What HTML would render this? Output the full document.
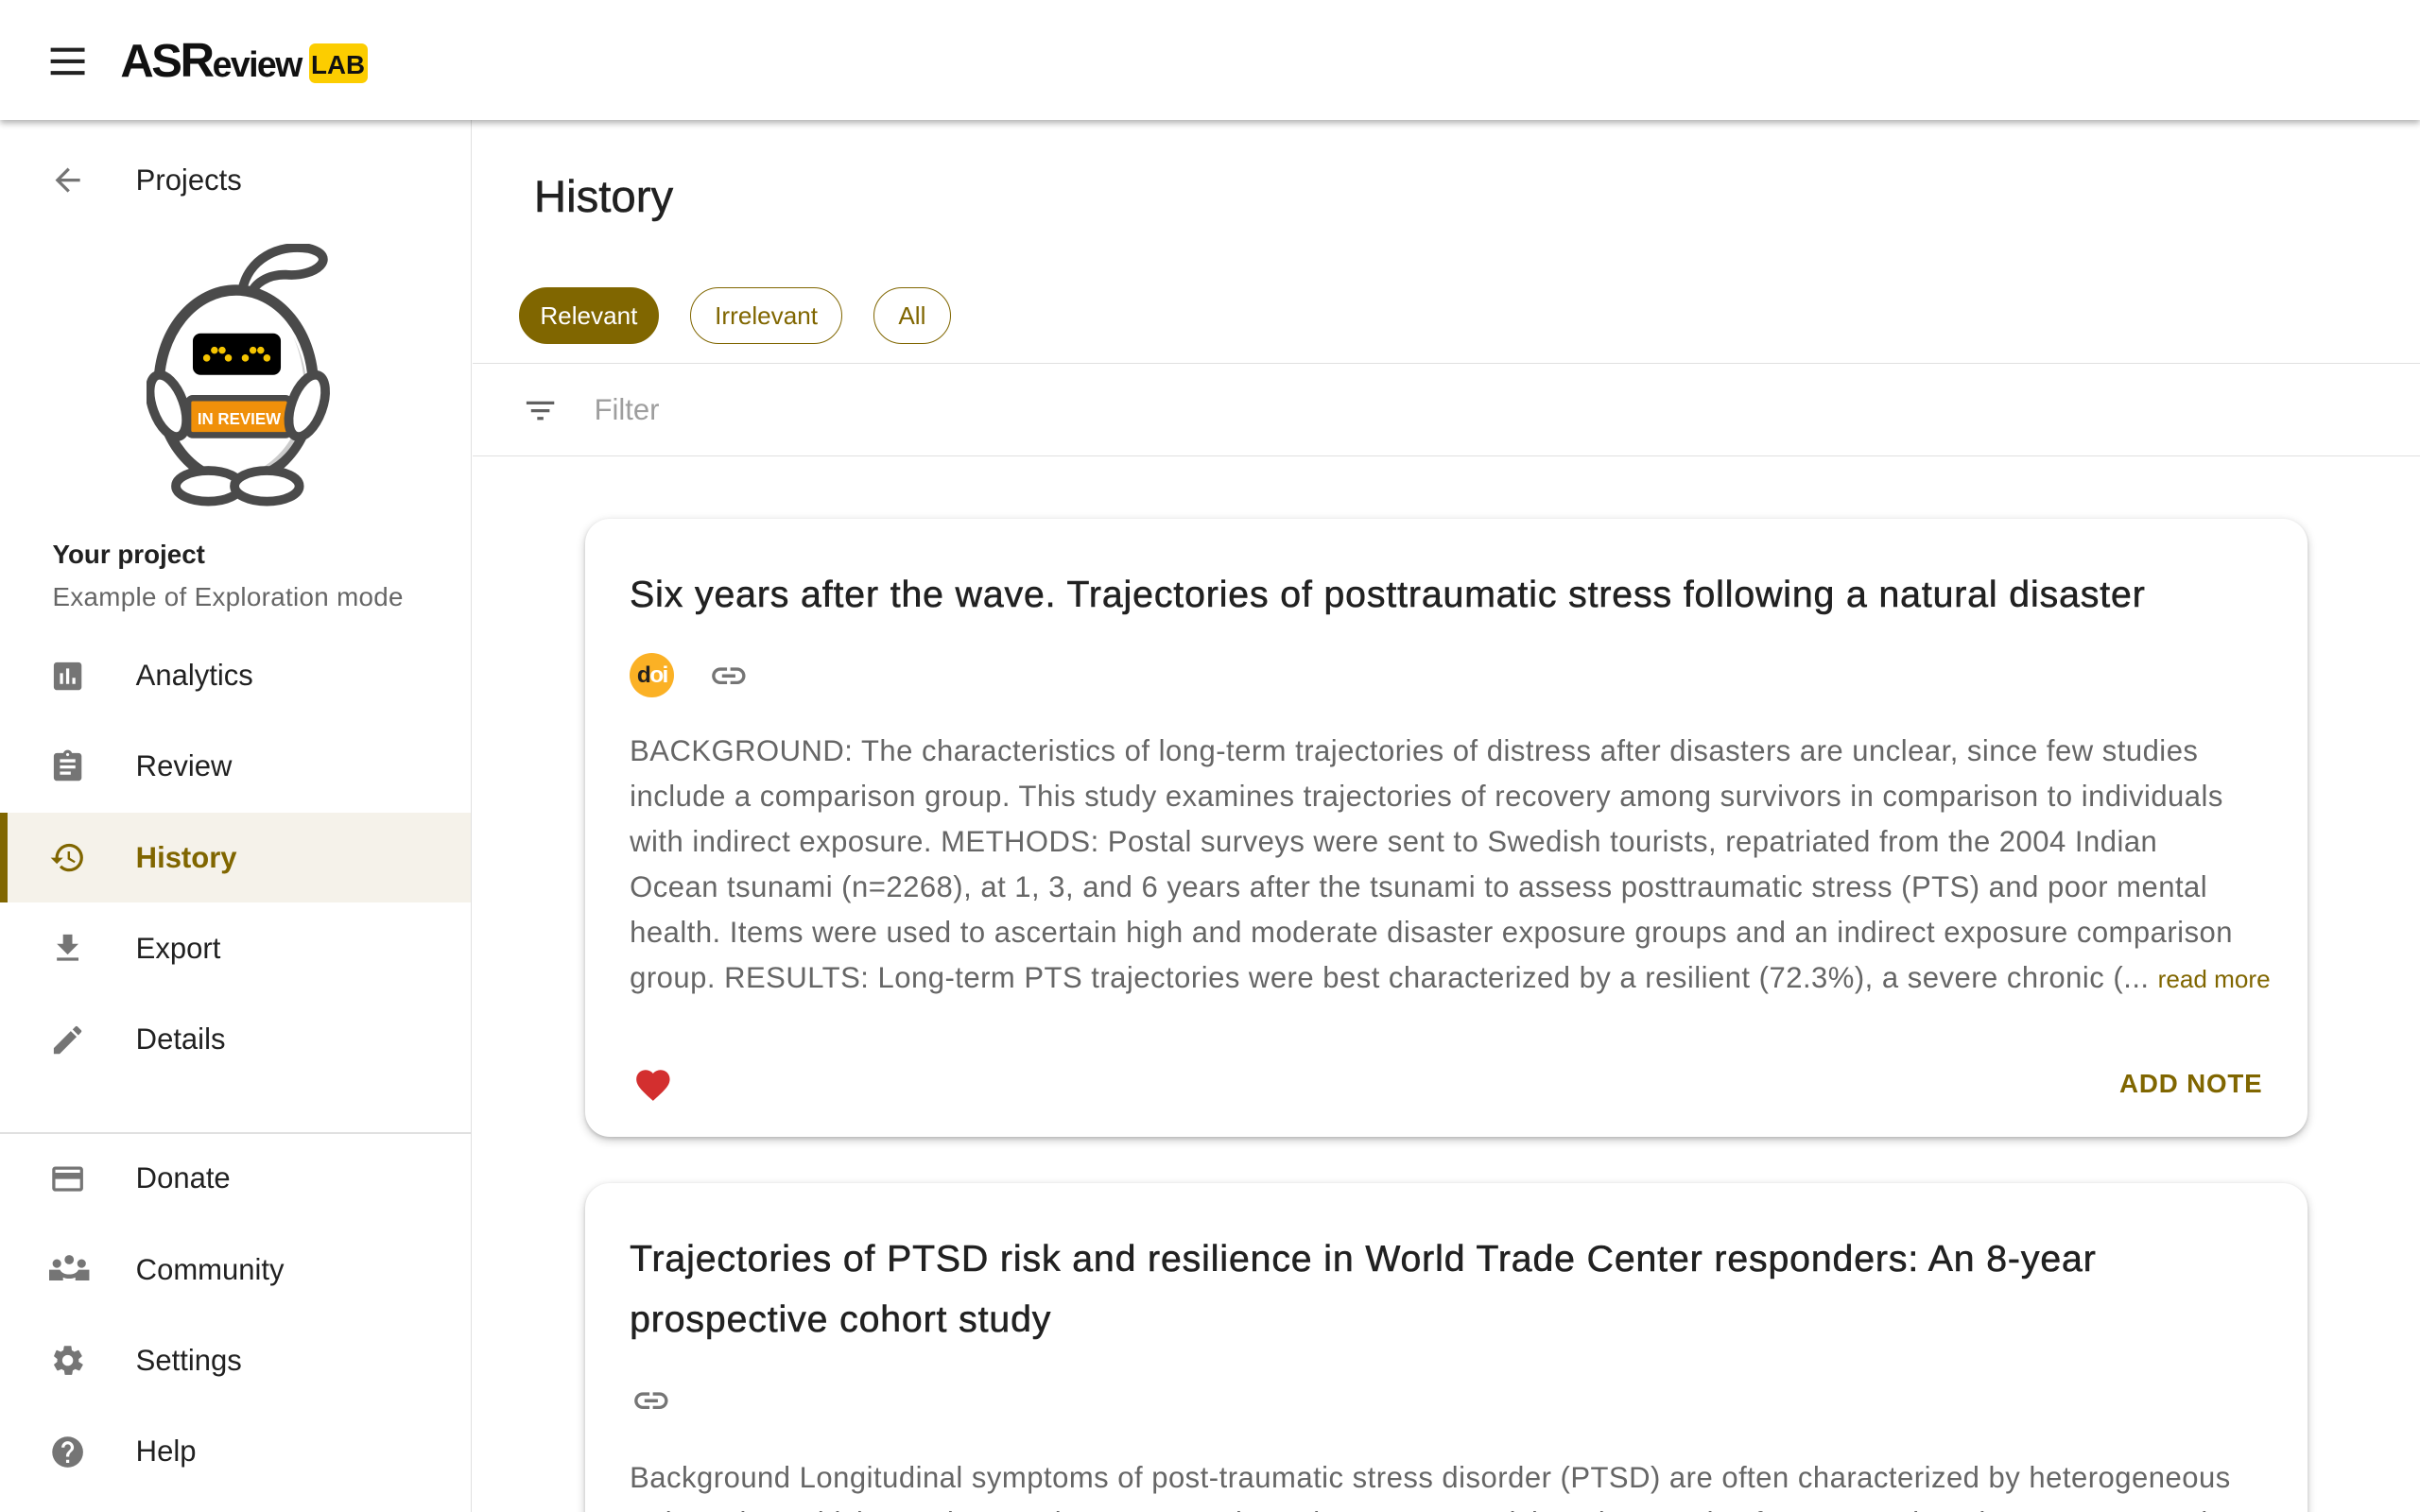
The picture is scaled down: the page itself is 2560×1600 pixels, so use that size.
<!DOCTYPE html>
<html><head><meta charset="utf-8"><style>
html,body{margin:0;padding:0;width:2560px;height:1600px;overflow:hidden;background:#fff}
#w{zoom:1.63265;width:1568px;height:980px;position:relative;font-family:"Liberation Sans",sans-serif;color:#212121;overflow:hidden}
.hdr{position:absolute;left:0;top:0;width:1568px;height:78px;background:#fff;box-shadow:0 2px 4px rgba(0,0,0,.3);z-index:5}
.side{position:absolute;left:0;top:78px;width:305px;height:902px;border-right:1px solid #e0e0e0;background:#fff}
.it{position:absolute;left:0;width:305px;height:58px;font-size:19px}
.it svg{position:absolute;left:32px;top:17px}
.it span{position:absolute;left:88px;top:18px}
.abs{position:absolute;left:0;top:0}
.chip{position:absolute;top:186px;height:37px;border:1px solid #806600;border-radius:19px;color:#806600;font-size:16px;line-height:36px;text-align:center;box-sizing:border-box}
.card{position:absolute;left:379px;width:1116px;background:#fff;border-radius:16px;box-shadow:0 2px 6px rgba(0,0,0,.22),0 1px 2px rgba(0,0,0,.12)}
.t{position:absolute;left:29px;font-size:24px;color:#212121;line-height:39px;letter-spacing:.55px;-webkit-text-stroke:.35px #212121;white-space:nowrap}
.p{position:absolute;left:29px;font-size:19px;line-height:29.4px;color:#666;letter-spacing:.3px;white-space:nowrap}
</style></head><body><div id="w">
<div class="hdr">
<svg class="abs" style="left:32px;top:30px" width="24" height="20" viewBox="0 0 24 20"><rect x="1" y="1" width="22" height="2.5" fill="#212121"/><rect x="1" y="8.5" width="22" height="2.5" fill="#212121"/><rect x="1" y="16" width="22" height="2.5" fill="#212121"/></svg>
<div class="abs" style="left:78px;top:21px;font-size:30px;font-weight:bold;letter-spacing:-1.5px;color:#111;white-space:nowrap">AS<span style="font-size:31px">R</span><span style="font-size:23px;letter-spacing:-1px">eview</span></div>
<div class="abs" style="left:200px;top:28px;width:38px;height:26px;background:#fccd00;border-radius:4px;font-size:17px;font-weight:bold;line-height:28px;text-align:center;color:#111">LAB</div>
</div>
<div class="side">
<div class="it" style="top:10px"><svg width="24" height="24" viewBox="0 0 24 24"><path d="M20 11H7.8l5.6-5.6L12 4l-8 8 8 8 1.4-1.4L7.8 13H20z" fill="#757575"/></svg><span>Projects</span></div>
<svg class="abs" style="left:95px;top:80px" width="120" height="170" viewBox="0 0 120 170">
<path d="M62 30 C66 10 85 0 105 3 C125 8 110 22 90 20 C78 20 70 26 68 32" fill="#fff" stroke="#4a4a4a" stroke-width="6"/>
<ellipse cx="58" cy="92" rx="50" ry="62" fill="#fff" stroke="#4a4a4a" stroke-width="7"/>
<path d="M95 60 C108 90 105 130 70 148 C100 140 115 100 95 60" fill="#ccc"/>
<rect x="30" y="58" width="57" height="27" rx="5" fill="#000"/>
<g fill="#f5c400"><circle cx="39" cy="74" r="2.3"/><circle cx="44" cy="69" r="2.3"/><circle cx="49" cy="69" r="2.3"/><circle cx="53" cy="74" r="2.3"/><circle cx="64" cy="74" r="2.3"/><circle cx="69" cy="69" r="2.3"/><circle cx="74" cy="69" r="2.3"/><circle cx="78" cy="74" r="2.3"/></g>
<rect x="27" y="100" width="66" height="24" rx="3" fill="#f0900a" stroke="#4a4a4a" stroke-width="4"/>
<text x="60" y="117" text-anchor="middle" font-family="Liberation Sans" font-weight="bold" font-size="10.5" fill="#fff" textLength="54" lengthAdjust="spacingAndGlyphs">IN REVIEW</text>
<ellipse cx="14" cy="105" rx="10" ry="21" fill="#fff" stroke="#4a4a4a" stroke-width="6" transform="rotate(-20 14 105)"/>
<ellipse cx="104" cy="105" rx="10" ry="21" fill="#fff" stroke="#4a4a4a" stroke-width="6" transform="rotate(20 104 105)"/>
<ellipse cx="40" cy="157" rx="21" ry="10" fill="#fff" stroke="#4a4a4a" stroke-width="6"/>
<ellipse cx="78" cy="157" rx="21" ry="10" fill="#fff" stroke="#4a4a4a" stroke-width="6"/>
</svg>
<div class="abs" style="left:34px;top:272px;font-size:17px;font-weight:bold;color:#212121">Your project</div>
<div class="abs" style="left:34px;top:299px;font-size:17px;color:#666;letter-spacing:.2px">Example of Exploration mode</div>
<div class="it" style="top:331px"><svg width="24" height="24" viewBox="0 0 24 24"><path d="M19 3H5c-1.1 0-2 .9-2 2v14c0 1.1.9 2 2 2h14c1.1 0 2-.9 2-2V5c0-1.1-.9-2-2-2zM9 17H7v-7h2v7zm4 0h-2V7h2v10zm4 0h-2v-4h2v4z" fill="#757575"/></svg><span>Analytics</span></div>
<div class="it" style="top:390px"><svg width="24" height="24" viewBox="0 0 24 24"><path d="M19 3h-4.2C14.4 1.8 13.3 1 12 1s-2.4.8-2.8 2H5c-1.1 0-2 .9-2 2v14c0 1.1.9 2 2 2h14c1.1 0 2-.9 2-2V5c0-1.1-.9-2-2-2zm-7 0c.6 0 1 .4 1 1s-.4 1-1 1-1-.4-1-1 .4-1 1-1zm2 14H7v-2h7v2zm3-4H7v-2h10v2zm0-4H7V7h10v2z" fill="#757575"/></svg><span>Review</span></div>
<div class="it" style="top:449px;background:#f5f2ea"><div class="abs" style="left:0;top:0;width:5px;height:58px;background:#806600"></div><svg width="24" height="24" viewBox="0 0 24 24"><path d="M13 3a9 9 0 0 0-9 9H1l3.9 3.9.1.1L9 12H6c0-3.9 3.1-7 7-7s7 3.1 7 7-3.1 7-7 7c-1.9 0-3.7-.8-4.9-2.1l-1.4 1.4C8.3 20 10.5 21 13 21a9 9 0 0 0 0-18zm-1 5v5l4.3 2.5.7-1.2-3.5-2.1V8z" fill="#806600"/></svg><span style="color:#806600;font-weight:bold">History</span></div>
<div class="it" style="top:508px"><svg width="24" height="24" viewBox="0 0 24 24"><path d="M19 9h-4V3H9v6H5l7 7 7-7zM5 18v2h14v-2z" fill="#757575"/></svg><span>Export</span></div>
<div class="it" style="top:567px"><svg width="24" height="24" viewBox="0 0 24 24"><path d="M3 17.2V21h3.8L17.8 9.9l-3.8-3.7zM20.7 7c.4-.4.4-1 0-1.4l-2.3-2.3c-.4-.4-1-.4-1.4 0l-1.8 1.8 3.7 3.8z" fill="#757575"/></svg><span>Details</span></div>
<div class="abs" style="left:0;top:656px;width:305px;height:1px;background:#e0e0e0"></div>
<div class="it" style="top:657px"><svg width="24" height="24" viewBox="0 0 24 24"><path d="M20 4H4c-1.1 0-2 .9-2 2v12c0 1.1.9 2 2 2h16c1.1 0 2-.9 2-2V6c0-1.1-.9-2-2-2zm0 14H4v-6h16v6zm0-10H4V6h16v2z" fill="#757575"/></svg><span>Donate</span></div>
<div class="it" style="top:716px"><svg width="26" height="24" viewBox="0 0 26 24"><g fill="#757575"><circle cx="13" cy="5.5" r="3"/><circle cx="5" cy="8" r="2.8"/><circle cx="21" cy="8" r="2.8"/><path d="M0 12h7c1 2 3 3 6 3s5-1 6-3h7v7H17v-2c-1 .5-2.5.8-4 .8s-3-.3-4-.8v2H0z"/></g></svg><span>Community</span></div>
<div class="it" style="top:775px"><svg width="24" height="24" viewBox="0 0 24 24"><path d="M19.1 12.9c0-.3.1-.6.1-.9s0-.6-.1-.9l2-1.6c.2-.1.2-.4.1-.6l-1.9-3.3c-.1-.2-.4-.3-.6-.2l-2.4 1c-.5-.4-1-.7-1.6-.9L14.4 3c0-.2-.2-.4-.5-.4h-3.8c-.2 0-.4.2-.5.4l-.4 2.5c-.6.2-1.1.6-1.6.9l-2.4-1c-.2-.1-.5 0-.6.2L3.2 8.9c-.1.2-.1.5.1.6l2 1.6c0 .3-.1.6-.1.9s0 .6.1.9l-2 1.6c-.2.1-.2.4-.1.6l1.9 3.3c.1.2.4.3.6.2l2.4-1c.5.4 1 .7 1.6.9l.4 2.5c0 .2.2.4.5.4h3.8c.2 0 .4-.2.5-.4l.4-2.5c.6-.2 1.1-.6 1.6-.9l2.4 1c.2.1.5 0 .6-.2l1.9-3.3c.1-.2.1-.5-.1-.6zM12 15.5A3.5 3.5 0 1 1 12 8.5a3.5 3.5 0 0 1 0 7z" fill="#757575"/></svg><span>Settings</span></div>
<div class="it" style="top:834px"><svg width="24" height="24" viewBox="0 0 24 24"><path d="M12 2a10 10 0 1 0 0 20 10 10 0 0 0 0-20zm1 17h-2v-2h2v2zm2.1-7.8-.9.9c-.7.7-1.2 1.3-1.2 2.9h-2v-.5c0-1.1.4-2.1 1.2-2.8l1.2-1.3c.4-.4.6-.9.6-1.4 0-1.1-.9-2-2-2s-2 .9-2 2H8a4 4 0 0 1 8 0c0 .9-.4 1.7-.9 2.2z" fill="#757575"/></svg><span>Help</span></div>
</div>
<div class="abs" style="left:346px;top:111px;font-size:29px;color:#212121;-webkit-text-stroke:.3px #212121">History</div>
<div class="chip" style="left:336px;width:91px;background:#806600;color:#fff">Relevant</div>
<div class="chip" style="left:447px;width:99px">Irrelevant</div>
<div class="chip" style="left:566px;width:50px">All</div>
<div class="abs" style="left:306px;top:235px;width:1262px;height:1px;background:#e0e0e0"></div>
<svg class="abs" style="left:338px;top:254px" width="24" height="24" viewBox="0 0 24 24"><path d="M3 6h18v2H3zm3 5h12v2H6zm4 5h4v2h-4z" fill="#616161"/></svg>
<div class="abs" style="left:385px;top:255px;font-size:19px;color:#9e9e9e">Filter</div>
<div class="abs" style="left:306px;top:295px;width:1262px;height:1px;background:#e0e0e0"></div>
<div class="card" style="top:336px;height:401px">
<div class="t" style="top:30px">Six years after the wave. Trajectories of posttraumatic stress following a natural disaster</div>
<div class="abs" style="left:29px;top:87px;width:29px;height:29px;border-radius:50%;background:#fbb125;font-size:15px;font-weight:bold;line-height:29px;text-align:center;color:#222;letter-spacing:-1px">d<span style="color:#fff">oi</span></div>
<svg class="abs" style="left:79px;top:89px" width="28" height="26" viewBox="0 0 24 24"><path d="M3.9 12c0-1.7 1.4-3.1 3.1-3.1h4V7H7a5 5 0 0 0 0 10h4v-1.9H7c-1.7 0-3.1-1.4-3.1-3.1zM8 13h8v-2H8zm9-6h-4v1.9h4c1.7 0 3.1 1.4 3.1 3.1s-1.4 3.1-3.1 3.1h-4V17h4a5 5 0 0 0 0-10z" fill="#757575"/></svg>
<div class="p" style="top:136px">BACKGROUND: The characteristics of long-term trajectories of distress after disasters are unclear, since few studies<br>include a comparison group. This study examines trajectories of recovery among survivors in comparison to individuals<br>with indirect exposure. METHODS: Postal surveys were sent to Swedish tourists, repatriated from the 2004 Indian<br>Ocean tsunami (n=2268), at 1, 3, and 6 years after the tsunami to assess posttraumatic stress (PTS) and poor mental<br>health. Items were used to ascertain high and moderate disaster exposure groups and an indirect exposure comparison<br>group. RESULTS: Long-term PTS trajectories were best characterized by a resilient (72.3%), a severe chronic (... <span style="color:#806600;font-size:16px;letter-spacing:0">read more</span></div>
<svg class="abs" style="left:30px;top:354px" width="28" height="26" viewBox="0 0 24 24"><path d="M12 21.4l-1.5-1.3C5.4 15.4 2 12.3 2 8.5 2 5.4 4.4 3 7.5 3c1.7 0 3.4.8 4.5 2.1C13.1 3.8 14.8 3 16.5 3 19.6 3 22 5.4 22 8.5c0 3.8-3.4 6.9-8.5 11.5z" fill="#d32f2f"/></svg>
<div class="abs" style="left:auto;right:29px;top:357px;font-size:17px;font-weight:bold;color:#806600;letter-spacing:.5px">ADD NOTE</div>
</div>
<div class="card" style="top:767px;height:260px">
<div class="t" style="top:30px">Trajectories of PTSD risk and resilience in World Trade Center responders: An 8-year<br>prospective cohort study</div>
<svg class="abs" style="left:29px;top:128px" width="28" height="26" viewBox="0 0 24 24"><path d="M3.9 12c0-1.7 1.4-3.1 3.1-3.1h4V7H7a5 5 0 0 0 0 10h4v-1.9H7c-1.7 0-3.1-1.4-3.1-3.1zM8 13h8v-2H8zm9-6h-4v1.9h4c1.7 0 3.1 1.4 3.1 3.1s-1.4 3.1-3.1 3.1h-4V17h4a5 5 0 0 0 0-10z" fill="#757575"/></svg>
<div class="p" style="top:176px">Background Longitudinal symptoms of post-traumatic stress disorder (PTSD) are often characterized by heterogeneous<br>trajectories, which may have unique pre-, peri-, and post-trauma risk and protective factors. To date, however, no study</div>
</div>
</div></body></html>
